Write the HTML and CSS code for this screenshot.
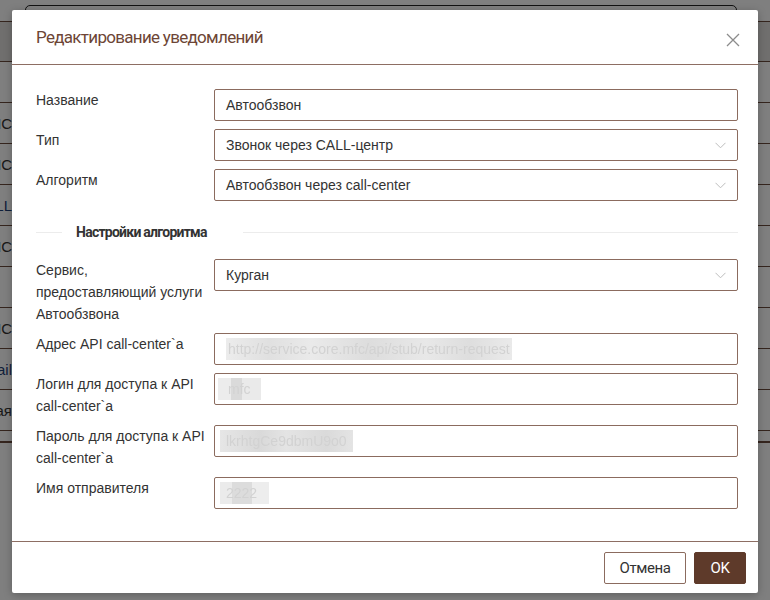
FILE: index.html
```html
<!DOCTYPE html>
<html lang="ru">
<head>
<meta charset="utf-8">
<title>Редактирование уведомлений</title>
<link rel="stylesheet" href="styles.css">
</head>
<body>
<div class="page">
  <div class="page-top">
    <div class="page-search"></div>
  </div>
  <div class="page-table">
    <div class="trow thead"><span class="cell"></span></div>
    <div class="trow"><span class="cell"></span></div>
    <div class="trow"><span class="cell">МФЦ СМС</span></div>
    <div class="trow"><span class="cell">МФЦ СМС</span></div>
    <div class="trow"><span class="cell link">CALL</span></div>
    <div class="trow"><span class="cell">МФЦ СМС</span></div>
    <div class="trow"><span class="cell"></span></div>
    <div class="trow"><span class="cell">МФЦ СМС</span></div>
    <div class="trow"><span class="cell link">Email</span></div>
    <div class="trow"><span class="cell">Электронная</span></div>
    <div class="trow short"><span class="cell"></span></div>
  </div>
</div>
<div class="overlay"></div>

<div class="modal">
  <div class="modal-header">
    <h1 class="modal-title">Редактирование уведомлений</h1>
    <svg class="close" width="14" height="14" viewBox="0 0 14 14"><path d="M1 1L13 13M13 1L1 13" stroke="#8c8c8c" stroke-width="1.3" fill="none"/></svg>
  </div>
  <div class="modal-body">
    <div class="form-grid">
      <div class="label">Название</div>
      <div class="field"><span class="val">Автообзвон</span></div>

      <div class="label">Тип</div>
      <div class="field select"><span class="val">Звонок через CALL-центр</span>
        <svg class="chev" width="11" height="7" viewBox="0 0 11 7"><path d="M0.5 0.8L5.5 5.8L10.5 0.8" stroke="#bdbdbd" stroke-width="1" fill="none"/></svg></div>

      <div class="label">Алгоритм</div>
      <div class="field select"><span class="val">Автообзвон через call-center</span>
        <svg class="chev" width="11" height="7" viewBox="0 0 11 7"><path d="M0.5 0.8L5.5 5.8L10.5 0.8" stroke="#bdbdbd" stroke-width="1" fill="none"/></svg></div>
    </div>

    <div class="section">
      <span class="sec-line short"></span>
      <span class="sec-title">Настройки алгоритма</span>
      <span class="sec-line"></span>
    </div>

    <div class="form-grid">
      <div class="label">Сервис, предоставляющий услуги Автообзвона</div>
      <div class="field select"><span class="val">Курган</span>
        <svg class="chev" width="11" height="7" viewBox="0 0 11 7"><path d="M0.5 0.8L5.5 5.8L10.5 0.8" stroke="#bdbdbd" stroke-width="1" fill="none"/></svg></div>

      <div class="label">Адрес API call-center`a</div>
      <div class="field"><span class="blur b-url">http://service.core.mfc/api/stub/return-request</span></div>

      <div class="label">Логин для доступа к API call-center`a</div>
      <div class="field"><span class="blur b-login">mfc</span></div>

      <div class="label">Пароль для доступа к API call-center`a</div>
      <div class="field"><span class="blur b-pass">lkrhtgCe9dbmU9o0</span></div>

      <div class="label">Имя отправителя</div>
      <div class="field"><span class="blur b-name">2222</span></div>
    </div>
  </div>
  <div class="modal-footer">
    <button class="btn btn-cancel">Отмена</button>
    <button class="btn btn-ok">OK</button>
  </div>
</div>
</body>
</html>
```
FILE: styles.css
```css
* { box-sizing: border-box; }
html, body { margin: 0; padding: 0; }
body {
  width: 770px;
  height: 600px;
  overflow: hidden;
  background: #ffffff;
  font-family: "Liberation Sans", Arial, sans-serif;
  color: #333333;
  position: relative;
}

/* background page */
.page { width: 770px; }
.page-top {
  height: 22px;
  padding: 5px 33px 0 25px;
  border-bottom: 1px solid #6b4a3c;
}
.page-search {
  height: 40px;
  border: 1px solid #222;
  border-radius: 5px;
  background: #fff;
}
.page-table { width: 770px; }
.trow {
  height: 41px;
  border-bottom: 1px solid #6b4a3c;
  display: flex;
  align-items: center;
}
.trow.thead { height: 40px; background: #e0dedc; }
.trow.short { height: 12px; border-bottom: 2px solid #6b4a3c; }
.cell {
  width: 12px;
  overflow: hidden;
  white-space: nowrap;
  display: flex;
  justify-content: flex-end;
  font-size: 15px;
  color: #333;
}
.cell.link { color: #1f3f75; }

.overlay {
  position: absolute;
  inset: 0;
  background: rgba(0, 0, 0, 0.5);
}

/* modal */
.modal {
  position: absolute;
  left: 12px;
  top: 10px;
  width: 746px;
  background: #ffffff;
  border-radius: 2px;
  box-shadow: 0 2px 8px rgba(0, 0, 0, 0.25);
}
.modal-header {
  height: 55px;
  border-bottom: 1px solid #8d6e63;
  padding: 0 18px 0 24px;
  display: flex;
  align-items: center;
  justify-content: space-between;
}
.modal-title {
  margin: 0 0 1px 0;
  font-family: Roboto, "Liberation Sans", sans-serif;
  font-weight: normal;
  font-size: 17px;
  color: #6d4535;
  letter-spacing: -0.7px;
}
.close { margin-top: 6px; }

.modal-body { padding: 24px 20px 32px 24px; }
.form-grid {
  display: grid;
  grid-template-columns: 178px 1fr;
  row-gap: 8px;
}
.label {
  font-size: 14px;
  line-height: 22px;
  color: #333;
  padding-right: 6px;
}
.field {
  height: 32px;
  border: 1px solid #8b6b5e;
  border-radius: 2px;
  display: flex;
  align-items: center;
  padding: 0 11px;
  font-size: 14px;
  color: #333;
  position: relative;
}
.select { justify-content: space-between; }

.blur {
  color: #d2d2d2;
  background: #ebebeb;
  line-height: 22px;
  font-size: 14px;
  filter: blur(0.5px);
}
.b-url { padding: 0 2px; background: linear-gradient(90deg, #ececec, #e0e0e0 15%, #eaeaea 30%, #dddddd 50%, #e8e8e8 70%, #dedede 85%, #eaeaea); }
.b-login { margin-left: -8px; padding: 0 10px; background: linear-gradient(90deg, #ececec 30%, #dadada 30%, #dadada 55%, #eaeaea 55%); }
.b-pass { margin-left: -6px; padding: 0 6px; background: linear-gradient(90deg, #e6e6e6, #d9d9d9 30%, #e4e4e4 50%, #dadada 80%, #e4e4e4); }
.b-name { margin-left: -6px; padding: 0 12px 0 6px; background: linear-gradient(90deg, #ebebeb 25%, #dcdcdc 25%, #dcdcdc 65%, #ededed 65%); }

.section {
  display: flex;
  align-items: center;
  margin: 19px 0 15px 0;
  height: 24px;
}
.sec-line { flex: 1; height: 1px; background: #ececec; }
.sec-line.short { flex: 0 0 26px; }
.sec-title {
  font-family: Roboto, "Liberation Sans", sans-serif;
  font-weight: bold;
  font-size: 14px;
  color: #333;
  letter-spacing: -0.75px;
  padding: 0 36px 0 14px;
}

.modal-footer {
  border-top: 1px solid #8d6e63;
  padding: 10px 12px 9px;
  display: flex;
  justify-content: flex-end;
  gap: 8px;
}
.btn {
  height: 32px;
  font-family: Roboto, "Liberation Sans", sans-serif;
  font-size: 15px;
  letter-spacing: -0.4px;
  border-radius: 2px;
  cursor: pointer;
  padding: 0;
}
.btn-cancel {
  width: 82px;
  background: #fff;
  border: 1px solid #8b6b5e;
  color: #333;
}
.btn-ok {
  width: 52px;
  background: #5e3a2a;
  border: 1px solid #5e3a2a;
  color: #fff;
}
```
